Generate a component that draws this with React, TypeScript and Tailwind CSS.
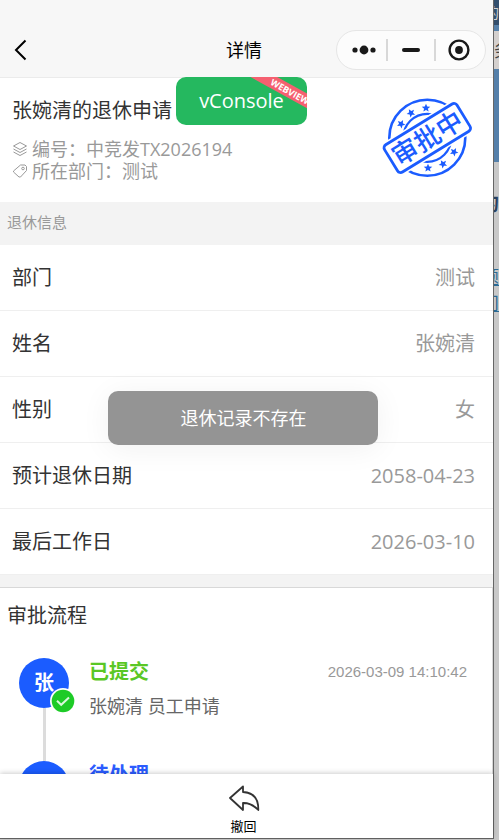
import type { ReactNode } from "react";

const details = [
  { label: "部门", value: "测试" },
  { label: "姓名", value: "张婉清" },
  { label: "性别", value: "女" },
  { label: "预计退休日期", value: "2058-04-23" },
  { label: "最后工作日", value: "2026-03-10" },
];

const stars = [
  [21, 28, -45],
  [31, 17, -30],
  [46, 12, 0],
  [48, 72, 0],
  [63, 68, -30],
  [74, 56, -45],
];

const Header = () => {
  return (
    <header className="flex h-[78px] shrink-0 items-end border-b border-[#ebebeb] bg-[#f7f7f7] pb-[7px]">
      <div className="flex h-10 w-full items-center justify-between pl-3 pr-[7px]">
        <button type="button" aria-label="返回" className="w-[140px]">
          <svg className="h-6 w-4" viewBox="0 0 16 24" fill="none" stroke="#000" strokeWidth="2">
            <path d="M13.5 2.5 4 12l9.500 9.5" />
          </svg>
        </button>
        <h1 className="text-[18px] leading-6 text-black">详情</h1>
        <div className="flex h-10 w-[150px] items-center rounded-full border border-[#e6e6e6] bg-[#fcfcfc]">
          <button type="button" aria-label="更多" className="flex flex-1 justify-center pl-1">
            <svg className="h-3 w-6" viewBox="0 0 24 12" fill="#191919">
              <circle cx="3" cy="6" r="2.6" />
              <circle cx="12" cy="6" r="4.4" />
              <circle cx="21" cy="6" r="2.6" />
            </svg>
          </button>
          <span className="h-[22px] w-[2px] bg-[#d8d8d8]" />
          <button type="button" aria-label="最小化" className="flex w-[46px] justify-center">
            <span className="h-1 w-[18px] rounded-full bg-[#191919]" />
          </button>
          <span className="h-[22px] w-[2px] bg-[#d8d8d8]" />
          <button type="button" aria-label="关闭" className="flex flex-1 justify-center pr-1">
            <svg className="h-[22px] w-[22px]" viewBox="0 0 22 22">
              <circle cx="11" cy="11" r="9.4" fill="none" stroke="#191919" strokeWidth="2.4" />
              <circle cx="11" cy="11" r="3.9" fill="#191919" />
            </svg>
          </button>
        </div>
      </div>
    </header>
  );
};

const Stamp = () => {
  return (
    <svg className="h-[84px] w-24 shrink-0" viewBox="0 0 96 84" role="img" aria-label="审批中">
      <g fill="none" stroke="#1b5cff" strokeWidth="2.6">
        <circle cx="47.3" cy="41.8" r="38" />
        <circle cx="47.3" cy="41.8" r="24" strokeWidth="2.200" />
      </g>
      {stars.map(([x, y, angle]) => (
        <path
          key={`${x}-${y}`}
          transform={`translate(${x} ${y}) rotate(${angle}) scale(0.95)`}
          d="M0-4.6 1.3-1.6 4.5-1.4 2 .7 2.8 3.8 0 2.1-2.8 3.8-2 .7-4.5-1.4-1.3-1.6Z"
          fill="#1b5cff"
        />
      ))}
      <g transform="translate(47.3 42) rotate(-31.6)">
        <rect x="-46" y="-19" width="92" height="38" fill="#fff" />
        <rect x="-42.5" y="-16" width="85" height="32" rx="3.5" fill="none" stroke="#1b5cff" strokeWidth="2.8" />
        <text x="0" y="9.500" textAnchor="middle" fontSize="26" fontWeight="500" fill="#1b5cff">
          审批中
        </text>
      </g>
    </svg>
  );
};

const Summary = () => {
  return (
    <section className="flex items-start justify-between bg-white pb-5 pl-3 pr-[17px] pt-4">
      <div>
        <h2 className="text-[20px] leading-[34px] text-[#333]">张婉清的退休申请</h2>
        <div className="mt-[10px] text-[18px] leading-[22px] text-[#999]">
          <p className="flex items-center gap-1">
            <svg className="h-4 w-4" viewBox="0 0 16 16" fill="none" stroke="#999" strokeLinejoin="round">
              <path d="M8 1.500 14.500 5 8 8.500 1.500 5ZM1.500 8 8 11.500 14.500 8M1.500 11 8 14.500 14.500 11" />
            </svg>
            编号：中竞发TX2026194
          </p>
          <p className="flex items-center gap-1">
            <svg className="h-4 w-4" viewBox="0 0 16 16" fill="none" stroke="#999" strokeLinejoin="round">
              <path d="M8.500 2h4.500l1.500 1.500v4L8.500 14H7L1.500 9V8Z" />
              <circle cx="11" cy="5.500" r="1.300" />
            </svg>
            所在部门：测试
          </p>
        </div>
      </div>
      <div className="pt-[2px]">
        <Stamp />
      </div>
    </section>
  );
};

const DetailList = () => {
  return (
    <section>
      <h3 className="bg-[#f3f3f3] px-[7px] pb-3 pt-[9px] text-[15px] leading-[22px] text-[#999]">退休信息</h3>
      <dl>
        {details.map((item) => (
          <div
            key={item.label}
            className="flex justify-between border-b border-[#efefef] bg-white py-[18px] pl-3 pr-[18px] text-[20px] leading-[29px]"
          >
            <dt className="text-[#333]">{item.label}</dt>
            <dd className="text-[#999]">{item.value}</dd>
          </div>
        ))}
      </dl>
    </section>
  );
};

const Step = ({ done, children }: { done?: boolean; children: ReactNode }) => {
  return (
    <li className="flex min-h-[103px] gap-5">
      <div className="flex flex-col items-center">
        <div className="relative flex h-[50px] w-[50px] items-center justify-center rounded-full bg-[#1b5cff] text-[20px] font-bold text-white">
          张
          {done && (
            <svg className="absolute -bottom-[6px] -right-[7px] h-[26px] w-[26px]" viewBox="0 0 26 26" fill="none">
              <circle cx="13" cy="13" r="13" fill="#fff" />
              <circle cx="13" cy="13" r="11.300" fill="#1dcb27" />
              <path d="m7 12.800 4.200 4L19 9.500" stroke="#d9f8db" strokeWidth="2" />
            </svg>
          )}
        </div>
        <span className="w-[3px] flex-1 bg-[#dcdcdc]" />
      </div>
      <div className="flex-1">{children}</div>
    </li>
  );
};

const Flow = () => {
  return (
    <section className="mt-3 border-r border-t border-[#d8d8d8] bg-white">
      <h3 className="px-[7px] pt-3 text-[20px] leading-8 text-[#333]">审批流程</h3>
      <ol className="pl-[19px] pr-[25px] pt-[26px]">
        <Step done>
          <div className="flex items-center justify-between">
            <strong className="text-[20px] leading-7 text-[#5ac725]">已提交</strong>
            <time className="font-['Liberation_Sans',sans-serif] text-[15px] leading-7 text-[#999]">
              2026-03-09 14:10:42
            </time>
          </div>
          <p className="pt-[6px] text-[18px] leading-7 text-[#666]">张婉清 员工申请</p>
        </Step>
        <Step>
          <strong className="text-[20px] leading-7 text-[#2b5cff]">待处理</strong>
        </Step>
      </ol>
    </section>
  );
};

// Page that shows past the right edge of the simulator window
const Backdrop = () => {
  return (
    <aside className="flex w-[5px] shrink-0 flex-col overflow-hidden bg-[#c8c8c8] text-[18px]" aria-hidden="true">
      <div className="flex h-[25px] shrink-0 items-center justify-end bg-[#334f6e] text-[14px] text-[#d0d0d0]">
        <span>的</span>
      </div>
      <div className="h-[6px] shrink-0 bg-[#5580aa]" />
      <div className="flex h-[38px] shrink-0 items-center bg-[#d4d0ce] text-[#444]">
        <span>务</span>
      </div>
      <div className="h-[93px] shrink-0 bg-[#5580aa]" />
      <div className="flex flex-col items-end pt-7">
        <span className="text-[20px] font-bold leading-7 text-[#2c4260]">的</span>
        <span className="mt-[46px] leading-[26px] text-[#2b6a94] underline">题</span>
        <span className="leading-[26px] text-[#2b6a94] underline">问</span>
      </div>
    </aside>
  );
};

export default function App() {
  return (
    <div className="flex h-screen bg-[#c8c8c8] font-['Open_Sans','Noto_Sans_CJK_SC',sans-serif]">
      <div className="relative mb-px flex min-w-0 flex-1 flex-col border-b border-r border-[#666] bg-[#f3f3f3]">
        <Header />
        <main className="min-h-0 flex-1 overflow-hidden">
          <Summary />
          <DetailList />
          <Flow />
        </main>
        <footer className="relative flex shrink-0 justify-center bg-white pb-[2px] pr-[6px] pt-2 shadow-[0_-1px_5px_rgba(0,0,0,0.2)]">
          <button type="button" className="flex flex-col items-center gap-[2px] text-[13px] leading-5 text-black">
            <svg className="h-8 w-8" viewBox="0 0 32 32" fill="none" stroke="#333" strokeWidth="1.800" strokeLinejoin="round">
              <path d="M15 4.500 2 16l13 12v-7c6-.3 10 1.500 15.300 7C30.500 17 26 10.500 15 10Z" />
            </svg>
            撤回
          </button>
        </footer>

        <button
          type="button"
          className="absolute left-[176px] top-[77px] h-12 w-[131px] overflow-hidden rounded-[10px] bg-[#25b85f] text-[20px] font-medium text-white"
        >
          vConsole
          <span className="absolute -right-[28px] top-[8px] w-[90px] rotate-[29deg] bg-[#f56070] text-center text-[9px] font-bold leading-[13px]">
            WEBVIEW
          </span>
        </button>

        <div
          role="status"
          className="absolute left-[22%] top-[391px] flex h-[54px] w-[270px] items-center justify-center rounded-[10px] bg-[#949494] text-[18px] text-white shadow-[0_4px_30px_rgba(0,0,0,0.06)]"
        >
          退休记录不存在
        </div>
      </div>
      <Backdrop />
    </div>
  );
}
